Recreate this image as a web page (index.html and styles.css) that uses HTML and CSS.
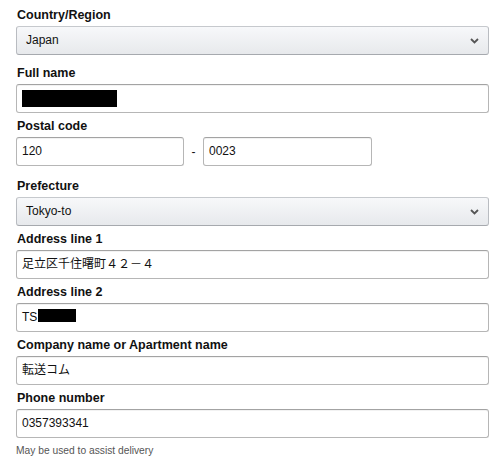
FILE: index.html
```html
<!DOCTYPE html>
<html lang="en">
<head>
<meta charset="utf-8">
<title>Address form</title>
<link rel="stylesheet" href="styles.css">
</head>
<body>
<div class="form">
  <div class="field field-country">
    <div class="label">Country/Region</div>
    <div class="control dropdown">
      <span>Japan</span>
      <svg class="chev" width="9" height="6" viewBox="0 0 9 6"><path d="M1 1 L4.5 4.5 L8 1" fill="none" stroke="#555" stroke-width="1.8"/></svg>
    </div>
  </div>
  <div class="field">
    <div class="label">Full name</div>
    <div class="control"><span class="redact redact-name"></span></div>
  </div>
  <div class="field field-postal">
    <div class="label">Postal code</div>
    <div class="postal-row">
      <div class="control postal">120</div>
      <div class="dash">-</div>
      <div class="control postal postal2">0023</div>
    </div>
  </div>
  <div class="field">
    <div class="label">Prefecture</div>
    <div class="control dropdown">
      <span>Tokyo-to</span>
      <svg class="chev" width="9" height="6" viewBox="0 0 9 6"><path d="M1 1 L4.5 4.5 L8 1" fill="none" stroke="#555" stroke-width="1.8"/></svg>
    </div>
  </div>
  <div class="field">
    <div class="label">Address line 1</div>
    <div class="control jp">足立区千住曙町４２－４</div>
  </div>
  <div class="field">
    <div class="label">Address line 2</div>
    <div class="control"><span>TS</span><span class="redact redact-ts"></span></div>
  </div>
  <div class="field">
    <div class="label">Company name or Apartment name</div>
    <div class="control jp">転送コム</div>
  </div>
  <div class="field field-last">
    <div class="label">Phone number</div>
    <div class="control">0357393341</div>
  </div>
  <div class="hint">May be used to assist delivery</div>
</div>
</body>
</html>
```
FILE: styles.css
```css
html, body {
  margin: 0;
  padding: 0;
  background: #fff;
}
body {
  font-family: "Liberation Sans", Arial, sans-serif;
  color: #111;
}
.form {
  width: 473px;
  padding: 7px 0 0 16px;
}
.field {
  margin-bottom: 5px;
}
.field-country {
  margin-bottom: 10px;
}
.field-postal {
  margin-bottom: 12px;
}
.field-last {
  margin-bottom: 0;
}
.label {
  font-size: 12.5px;
  font-weight: bold;
  line-height: 16px;
  padding-left: 1px;
  margin-bottom: 3px;
}
.control {
  box-sizing: border-box;
  height: 29px;
  border: 1px solid #b6b6b6;
  border-top-color: #a3a3a3;
  border-radius: 3px;
  background: #fff;
  box-shadow: inset 0 1px 0 rgba(0, 0, 0, 0.05);
  font-size: 12px;
  line-height: 27px;
  padding: 0 5px;
  display: flex;
  align-items: center;
  white-space: nowrap;
}
.jp {
  font-family: "Liberation Sans", "Noto Sans CJK JP", sans-serif;
}
.dropdown {
  background: linear-gradient(#f7f8fa, #e7e9ec);
  border-color: #c6c9cd #b9bcc1 #a6a9ae;
  box-shadow: none;
  padding: 0 9px 0 9px;
  justify-content: space-between;
}
.chev {
  display: block;
}
.postal-row {
  display: flex;
  align-items: center;
}
.postal {
  width: 168px;
}
.postal2 {
  width: 169px;
}
.dash {
  width: 19px;
  text-align: center;
  font-size: 12px;
  color: #111;
}
.redact {
  display: inline-block;
  background: #000;
}
.redact-name {
  width: 95px;
  height: 17px;
}
.redact-ts {
  width: 38px;
  height: 13px;
  margin-left: 1px;
  position: relative;
  top: -2px;
}
.hint {
  font-size: 10.25px;
  line-height: 14px;
  color: #555;
  margin-top: 6px;
}
```
